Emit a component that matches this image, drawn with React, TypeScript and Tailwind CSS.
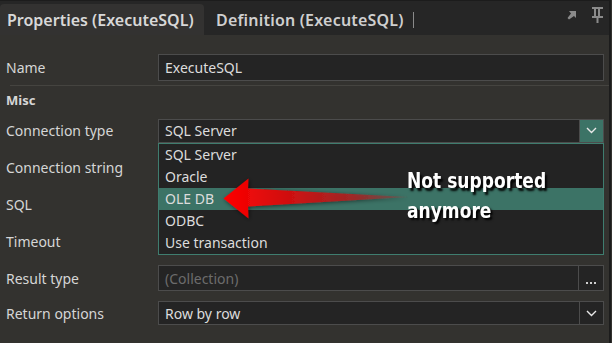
import type { ReactNode } from "react";

const items = ["SQL Server", "Oracle", "OLE DB", "ODBC", "Use transaction"];

function Chevron() {
  return (
    <svg width="11" height="7" viewBox="0 0 11 7" fill="none">
      <polyline points="1,1 5.5,5.5 10,1" stroke="#e8e8e8" strokeWidth="1.4" />
    </svg>
  );
}

function Row({ label, className, children }: { label: string; className: string; children?: ReactNode }) {
  return (
    <div className={`flex items-center ${className}`}>
      <div className="w-[158px] pl-[6px] text-[14px] text-[#d6d6d6]">{label}</div>
      <div className="flex-1 pr-[5px]">{children}</div>
    </div>
  );
}

export default function App() {
  return (
    <div className="w-[612px] h-[343px] flex bg-[#33322f] font-['Noto_Sans',sans-serif] overflow-hidden relative">
      <div className="flex-1 flex flex-col">
        {/* Tab strip */}
        <div className="h-[35px] bg-[#262626] border-t border-[#1c1c1c] flex items-end">
          <div className="h-[31px] w-[204px] bg-[#333231] rounded-t-[4px] flex items-center pl-[7px] text-[16px] font-semibold text-[#d8d8d8]">
            Properties (ExecuteSQL)
          </div>
          <div className="h-[31px] flex items-center pl-[12px] text-[16px] font-semibold tracking-[0.2px] text-[#cfcfcf]">
            Definition (ExecuteSQL)
            <span className="ml-[9px] w-px h-[16px] bg-[#8a8a8a]" />
          </div>
          <div className="ml-auto h-[34px] flex items-start pt-[6px] gap-[15px] pr-[6px]">
            <svg width="10" height="10" viewBox="0 0 10 10" className="mt-[3px]">
              <polygon points="2,1 9,1 9,8 7,6 2,9.5 0.5,8 4,3.5" fill="#8a8a8a" />
            </svg>
            <svg width="11" height="16" viewBox="0 0 11 16">
              <rect x="0" y="0" width="11" height="2" fill="#8a8a8a" />
              <rect x="2" y="2" width="2" height="7" fill="#8a8a8a" />
              <rect x="6" y="2" width="2" height="7" fill="#8a8a8a" />
              <rect x="0" y="9" width="11" height="2" fill="#8a8a8a" />
              <rect x="4.5" y="11" width="2" height="5" fill="#8a8a8a" />
            </svg>
          </div>
        </div>

        {/* Property grid */}
        <div className="pt-[14px] flex flex-col">
          <Row label="Name" className="h-[36px]">
            <div className="h-[27px] bg-[#242424] border border-[#4c4c4c] flex items-center pl-[6px] text-[14px] text-[#dcdcdc]">
              ExecuteSQL
            </div>
          </Row>
          <div className="h-px bg-[#454440] ml-[10px]" />
          <div className="h-[30px] flex items-center pl-[6px] text-[13px] font-bold text-[#d6d6d6]">Misc</div>
          <Row label="Connection type" className="h-[29px] relative z-10">
            <div className="relative">
              <div className="h-[24px] bg-[#242424] border border-[#4c4c4c] flex items-center text-[14px] text-[#dcdcdc]">
                <span className="pl-[6px] flex-1">SQL Server</span>
                <div className="w-[24px] h-full bg-[#3c7366] border-l border-[#4c4c4c] flex items-center justify-center">
                  <Chevron />
                </div>
              </div>
              {/* Open dropdown list */}
              <div className="absolute top-full left-0 right-0 bg-[#232323] border border-[#3f7d6f]">
                {items.map((it) => (
                  <div
                    key={it}
                    className={`h-[22px] flex items-center pl-[6px] text-[14px] text-[#dcdcdc] ${it === "OLE DB" ? "bg-[#3c7366]" : ""}`}
                  >
                    {it}
                  </div>
                ))}
              </div>
            </div>
          </Row>
          <Row label="Connection string" className="h-[37px] mt-[4px]" />
          <Row label="SQL" className="h-[37px]" />
          <Row label="Timeout" className="h-[37px]" />
          <Row label="Result type" className="h-[36px]">
            <div className="h-[26px] bg-[#242424] border border-[#4c4c4c] flex items-center text-[14px]">
              <span className="pl-[6px] flex-1 text-[#6c6c6c]">(Collection)</span>
              <div className="w-[25px] h-full border-l border-[#4c4c4c] flex items-end justify-center pb-[6px] gap-[2px]">
                <span className="w-[2px] h-[2px] bg-[#cfcfcf]" />
                <span className="w-[2px] h-[2px] bg-[#cfcfcf]" />
                <span className="w-[2px] h-[2px] bg-[#cfcfcf]" />
              </div>
            </div>
          </Row>
          <Row label="Return options" className="h-[34px]">
            <div className="h-[24px] bg-[#242424] border border-[#4c4c4c] flex items-center text-[14px] text-[#dcdcdc]">
              <span className="pl-[6px] flex-1">Row by row</span>
              <div className="w-[24px] h-full border-l border-[#4c4c4c] flex items-center justify-center">
                <Chevron />
              </div>
            </div>
          </Row>
        </div>
      </div>
      <div className="w-[2px] bg-[#1c1c1c] mr-px" />

      {/* Annotation arrow */}
      <svg
        className="absolute left-[215px] top-[172px] z-20"
        width="200"
        height="52"
        viewBox="215 172 200 52"
      >
        <defs>
          <linearGradient id="redfade" x1="223" y1="0" x2="408" y2="0" gradientUnits="userSpaceOnUse">
            <stop offset="0" stopColor="#ff0000" />
            <stop offset="0.35" stopColor="#d01010" />
            <stop offset="0.7" stopColor="#a82222" stopOpacity="0.9" />
            <stop offset="1" stopColor="#8a4040" stopOpacity="0.4" />
          </linearGradient>
          <filter id="shadow" x="-10%" y="-30%" width="120%" height="160%">
            <feDropShadow dx="1" dy="1" stdDeviation="2" floodColor="#000" floodOpacity="0.55" />
          </filter>
        </defs>
        <polygon
          points="223.5,198.5 248.5,178.5 248,188.5 408,197 248,206.5 248.5,218.5"
          fill="url(#redfade)"
          filter="url(#shadow)"
        />
      </svg>

      <div className="absolute left-[407px] top-[166px] z-20 origin-top-left scale-y-[1.12] text-[19px] leading-[26px] font-bold text-white font-['DejaVu_Sans_Condensed',sans-serif] [text-shadow:2px_2px_2px_#000]">
        Not supported
        <br />
        anymore
      </div>
    </div>
  );
}
